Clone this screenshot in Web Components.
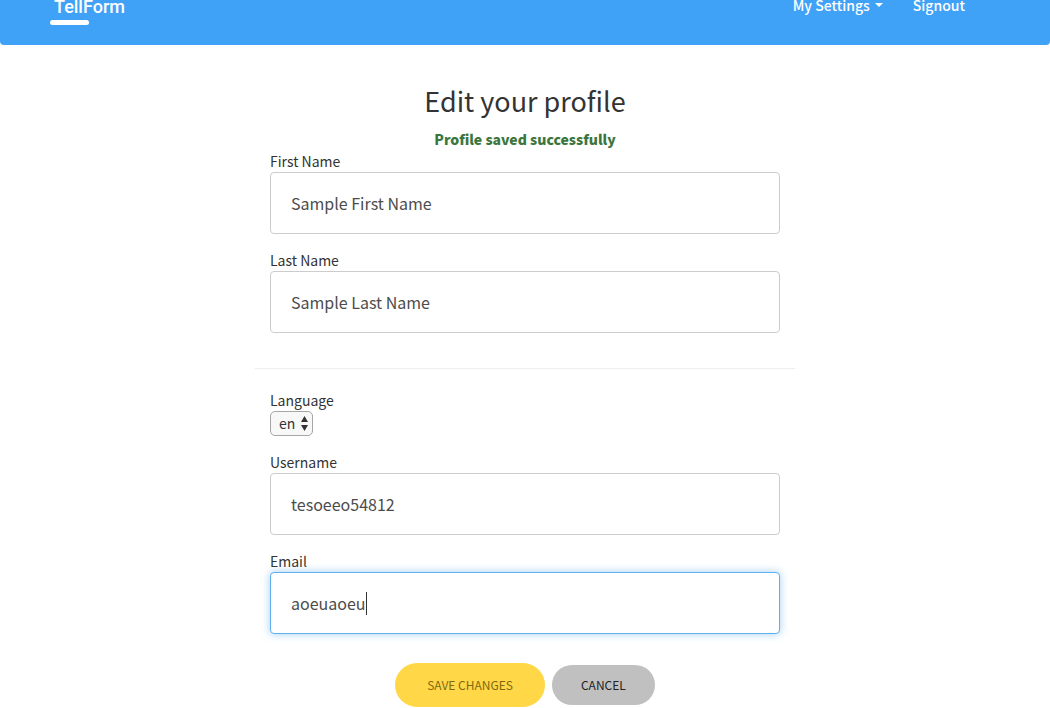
<!DOCTYPE html>
<html lang="en">
<head>
<meta charset="utf-8">
<meta name="viewport" content="width=device-width, initial-scale=1">
<title>TellForm - Edit your profile</title>
<style>
  body { margin: 0; background: #fff; color: #333; font: 14px/20px "Noto Sans CJK SC", "Noto Sans", sans-serif; overflow: hidden; }
</style>
</head>
<body>
<site-header></site-header>
<profile-page></profile-page>
<script>
  const define = (name, html, setup) => customElements.define(name, class extends HTMLElement {
    constructor() {
      super();
      this.attachShadow({ mode: 'open' });
    }
    connectedCallback() {
      const template = document.createElement('template');
      template.innerHTML = html;
      this.shadowRoot.replaceChildren(template.content.cloneNode(true));
      if (setup) setup(this, this.shadowRoot);
    }
  });

  /* The bar starts above the fold edge, as when the page is scrolled a little. */
  define('site-header', `
    <style>
      :host { display: block; margin-top: -33px; background: #3fa2f7; border-radius: 0 0 4px 4px; color: #fff; }
      nav { display: flex; justify-content: space-between; align-items: flex-start; padding: 28px 85px 0 50px; min-height: 50px; }
      a { color: inherit; text-decoration: none; }
      .logo { display: grid; font: 500 18px/24px Roboto, "Liberation Sans", sans-serif; }
      .logo span { padding-left: 4px; }
      .logo::after { content: ""; width: 39px; height: 5px; border-radius: 3px; background: #fff; margin-top: 1px; }
      ul { display: flex; gap: 30px; margin: 0; padding: 0; list-style: none; font-weight: 500; }
      .menu { display: flex; align-items: center; gap: 5px; }
      svg { display: block; }
    </style>
    <nav>
      <a class="logo" href="#home"><span>TellForm</span></a>
      <ul>
        <li><a class="menu" href="#settings">My Settings <svg width="8" height="4" viewBox="0 0 8 4" aria-hidden="true"><path d="M0 0h8L4 4z" fill="currentColor"/></svg></a></li>
        <li><a href="#signout">Signout</a></li>
      </ul>
    </nav>`);

  define('text-field', `
    <style>
      :host { display: block; margin-bottom: 17px; }
      label { display: block; line-height: 18px; padding-bottom: 2px; }
      .box { position: relative; }
      input { display: block; box-sizing: border-box; width: 100%; height: 62px; padding: 0 20px; border: 1px solid #ccc; border-radius: 4px; background: #fff; color: #4c4c4c; font: inherit; font-size: 16px; outline: none; caret-color: transparent; }
      :host([active]) input { border-color: #5fb0ee; box-shadow: 0 0 8px rgba(102, 175, 233, .6); }
      .caret { display: none; position: absolute; left: 96px; top: 20px; width: 1px; height: 23px; background: #333; }
      :host([active]) .caret { display: block; }
    </style>
    <label for="field"></label>
    <div class="box"><input id="field" type="text"><span class="caret"></span></div>`,
    (host, root) => {
      root.querySelector('label').textContent = host.getAttribute('label');
      const input = root.querySelector('input');
      input.value = host.getAttribute('value');
      input.name = host.getAttribute('name');
    });

  define('language-select', `
    <style>
      :host { display: block; margin-bottom: 17px; }
      label { display: block; line-height: 18px; padding-bottom: 2px; }
      .box { position: relative; width: max-content; }
      select { appearance: none; display: block; box-sizing: border-box; width: 43px; height: 25px; padding: 0 0 2px 8px; border: 1px solid #a6a6a6; border-radius: 5px; background: #f8f8f8; color: #333; font: inherit; line-height: 20px; }
      svg { position: absolute; right: 5px; top: 5px; pointer-events: none; }
    </style>
    <label for="language">Language</label>
    <div class="box">
      <select id="language"><option>en</option></select>
      <svg width="7" height="15" viewBox="0 0 7 15" aria-hidden="true"><path d="M3.500 0L7 6H0zM0 9h7l-3.500 6z" fill="#333"/></svg>
    </div>`);

  define('pill-button', `
    <style>
      :host { display: block; }
      button { display: block; height: 40px; padding: 0 29px; border: 0; border-radius: 22px; background: silver; color: #222; font: inherit; font-size: 12px; line-height: 20px; text-transform: uppercase; cursor: pointer; }
      :host([primary]) button { height: 44px; padding: 0 32px; background: #ffd747; color: #7f6910; }
    </style>
    <button type="button"><slot></slot></button>`);

  define('profile-page', `
    <style>
      :host { display: block; padding: 36px 15px 1px; }
      main { max-width: 510px; margin: 0 auto; }
      h1 { margin: 0; font-size: 27px; line-height: 40px; font-weight: 400; text-align: center; }
      .status { margin: 8px 0 3px; text-align: center; color: #3c763d; font-weight: 900; }
      hr { margin: 35px -15px 22px; border: 0; border-top: 1px solid #eee; }
      .actions { display: flex; justify-content: center; align-items: center; gap: 7px; margin-top: 29px; }
    </style>
    <main>
      <h1>Edit your profile</h1>
      <p class="status" role="status">Profile saved successfully</p>
      <text-field label="First Name" name="firstName" value="Sample First Name"></text-field>
      <text-field label="Last Name" name="lastName" value="Sample Last Name"></text-field>
      <hr>
      <language-select></language-select>
      <text-field label="Username" name="username" value="tesoeeo54812"></text-field>
      <text-field label="Email" name="email" value="aoeuaoeu" active></text-field>
      <div class="actions">
        <pill-button primary>Save changes</pill-button>
        <pill-button>Cancel</pill-button>
      </div>
    </main>`);
</script>
</body>
</html>
